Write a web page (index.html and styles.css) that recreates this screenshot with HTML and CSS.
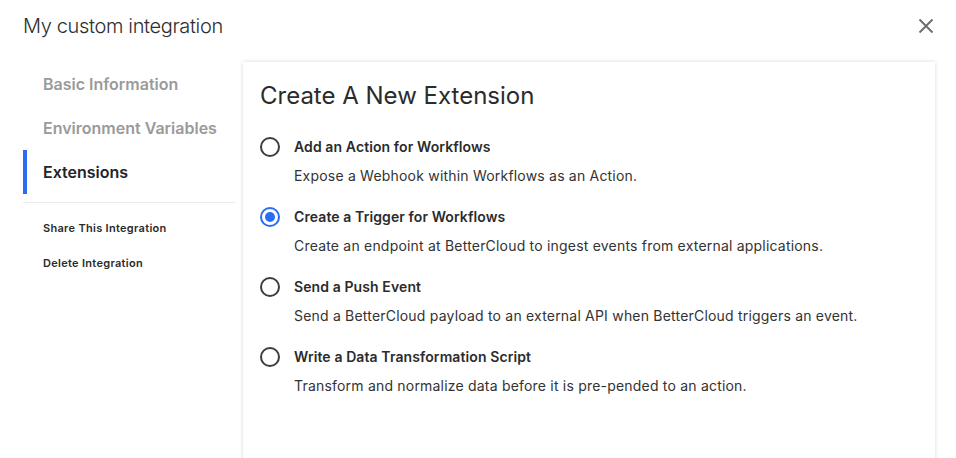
FILE: index.html
```html
<!DOCTYPE html>
<html>
<head>
<meta charset="utf-8">
<title>My custom integration</title>
<link rel="stylesheet" href="styles.css">
</head>
<body>
<div class="modal">
	<div class="modal-header">
		<h1 class="modal-title">My custom integration</h1>
		<button class="close" aria-label="Close">
			<svg width="16" height="16" viewBox="0 0 16 16"><path d="M1.5 1.5L14.5 14.5M14.5 1.5L1.5 14.5" stroke="#6b6b6b" stroke-width="1.8" fill="none"/></svg>
		</button>
	</div>
	<div class="modal-body">
		<div class="sidebar">
			<ul class="nav">
				<li class="nav-item">Basic Information</li>
				<li class="nav-item">Environment Variables</li>
				<li class="nav-item active">Extensions</li>
			</ul>
			<div class="divider"></div>
			<ul class="actions">
				<li>Share This Integration</li>
				<li>Delete Integration</li>
			</ul>
		</div>
		<div class="card">
			<h2 class="card-title">Create A New Extension</h2>
			<div class="option">
				<span class="radio"></span>
				<div class="option-text">
					<div class="option-label">Add an Action for Workflows</div>
					<div class="option-desc">Expose a Webhook within Workflows as an Action.</div>
				</div>
			</div>
			<div class="option">
				<span class="radio checked"></span>
				<div class="option-text">
					<div class="option-label">Create a Trigger for Workflows</div>
					<div class="option-desc">Create an endpoint at BetterCloud to ingest events from external applications.</div>
				</div>
			</div>
			<div class="option">
				<span class="radio"></span>
				<div class="option-text">
					<div class="option-label">Send a Push Event</div>
					<div class="option-desc">Send a BetterCloud payload to an external API when BetterCloud triggers an event.</div>
				</div>
			</div>
			<div class="option">
				<span class="radio"></span>
				<div class="option-text">
					<div class="option-label">Write a Data Transformation Script</div>
					<div class="option-desc">Transform and normalize data before it is pre-pended to an action.</div>
				</div>
			</div>
		</div>
	</div>
</div>
</body>
</html>
```

FILE: styles.css
```css
* {
	box-sizing: border-box;
}

body, ul, li, h1, h2 {
	padding: 0;
	margin: 0;
}

body {
	font-family: Inter, "Noto Sans", sans-serif;
	color: #2b2b2b;
	background: #fff;
	overflow: hidden;
}

.modal {
	height: 458px;
	padding: 0 21px 0 23px;
}

.modal-header {
	display: flex;
	align-items: center;
	justify-content: space-between;
	height: 52px;
}

.modal-title {
	font-size: 20px;
	font-weight: 300;
	color: #2e2e2e;
	letter-spacing: -0.35px;
}

.close {
	border: 0;
	background: none;
	padding: 0;
	margin-right: 1px;
	display: flex;
}

.modal-body {
	display: flex;
	gap: 8px;
	padding-top: 10px;
	height: 406px;
}

.sidebar {
	width: 212px;
	flex: none;
}

.nav {
	list-style: none;
}

.nav-item {
	height: 44px;
	line-height: 44px;
	padding-left: 16px;
	font-size: 16px;
	font-weight: 600;
	color: #9a9a9a;
	border-left: 4px solid transparent;
}

.nav-item.active {
	color: #22252a;
	border-left-color: #2a6cf6;
}

.divider {
	height: 1px;
	background: #e6ebf1;
	margin-top: 8px;
}

.actions {
	list-style: none;
	padding-top: 16px;
}

.actions li {
	font-size: 11px;
	font-weight: 600;
	letter-spacing: 0.3px;
	color: #2b2b2b;
	padding-left: 20px;
	height: 35px;
	line-height: 19px;
}

.card {
	flex: 1;
	background: #fff;
	box-shadow: 0 0 4px rgba(0, 0, 0, 0.16);
	padding: 19px 17px;
	margin-bottom: -20px;
}

.card-title {
	font-size: 24px;
	font-weight: 400;
	color: #2b2b2b;
	line-height: 30px;
	margin-bottom: 19px;
}

.option {
	display: flex;
	gap: 14px;
	height: 70px;
}

.radio {
	width: 20px;
	height: 20px;
	border: 2px solid #3d3d3d;
	border-radius: 50%;
	flex: none;
	margin-top: 7px;
	display: flex;
	align-items: center;
	justify-content: center;
}

.radio.checked {
	border-color: #2a6cf6;
}

.radio.checked::after {
	content: "";
	width: 10px;
	height: 10px;
	border-radius: 50%;
	background: #2a6cf6;
}

.option-label {
	font-size: 14px;
	font-weight: 600;
	letter-spacing: 0.1px;
	line-height: 34px;
	color: #2b2b2b;
}

.option-desc {
	font-size: 14px;
	font-weight: 400;
	letter-spacing: 0.2px;
	line-height: 24px;
	color: #333;
}
```
